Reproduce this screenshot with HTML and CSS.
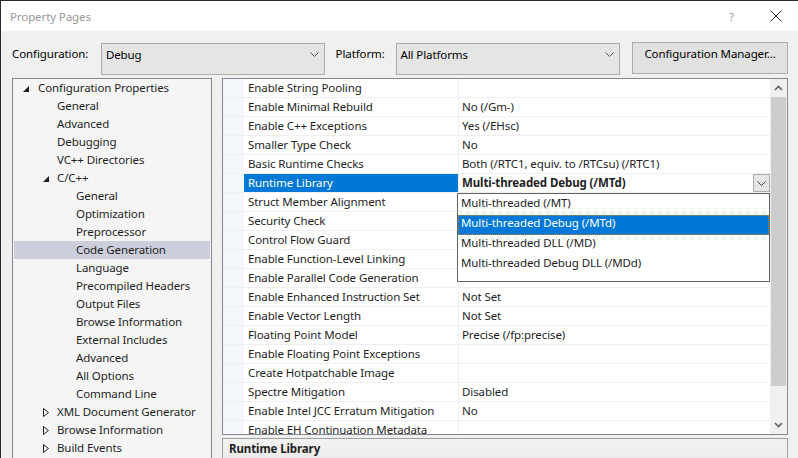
FILE: index.html
```html
<!DOCTYPE html>
<html lang="en">
<head>
    <meta charset="UTF-8">
    <title>Property Pages</title>
    <link rel="stylesheet" href="styles.css">
</head>
<body>
<div class="window">
    <div class="titlebar">
        <span class="title">Property Pages</span>
        <span class="help">?</span>
        <svg class="close" width="12" height="12" viewBox="0 0 12 12"><path d="M0.5 0.5L11.5 11.5M11.5 0.5L0.5 11.5" stroke="#333" stroke-width="1" fill="none"/></svg>
    </div>

    <div class="content">
        <div class="toolbar">
            <span class="label">Configuration:</span>
            <div class="combo combo-config">
                <span>Debug</span>
                <svg class="chev" width="9" height="5" viewBox="0 0 9 5"><path d="M0.5 0.5L4.5 4.5L8.5 0.5" stroke="#555" fill="none"/></svg>
            </div>
            <span class="label label-platform">Platform:</span>
            <div class="combo combo-platform">
                <span>All Platforms</span>
                <svg class="chev" width="9" height="5" viewBox="0 0 9 5"><path d="M0.5 0.5L4.5 4.5L8.5 0.5" stroke="#555" fill="none"/></svg>
            </div>
            <div class="button">Configuration Manager...</div>
        </div>

        <div class="main">
            <div class="tree">
                <div class="node lvl0"><svg class="tri" width="6" height="6" viewBox="0 0 6 6"><path d="M6 0L6 6L0 6Z" fill="#1e1e1e"/></svg>Configuration Properties</div>
                <div class="node lvl1">General</div>
                <div class="node lvl1">Advanced</div>
                <div class="node lvl1">Debugging</div>
                <div class="node lvl1">VC++ Directories</div>
                <div class="node lvl1"><svg class="tri" width="6" height="6" viewBox="0 0 6 6"><path d="M6 0L6 6L0 6Z" fill="#1e1e1e"/></svg>C/C++</div>
                <div class="node lvl2">General</div>
                <div class="node lvl2">Optimization</div>
                <div class="node lvl2">Preprocessor</div>
                <div class="node lvl2 selected">Code Generation</div>
                <div class="node lvl2">Language</div>
                <div class="node lvl2">Precompiled Headers</div>
                <div class="node lvl2">Output Files</div>
                <div class="node lvl2">Browse Information</div>
                <div class="node lvl2">External Includes</div>
                <div class="node lvl2">Advanced</div>
                <div class="node lvl2">All Options</div>
                <div class="node lvl2">Command Line</div>
                <div class="node lvl1"><svg class="tri closed" width="6" height="9" viewBox="0 0 6 9"><path d="M0.5 0.5L5.5 4.5L0.5 8.5Z" stroke="#1e1e1e" fill="none"/></svg>XML Document Generator</div>
                <div class="node lvl1"><svg class="tri closed" width="6" height="9" viewBox="0 0 6 9"><path d="M0.5 0.5L5.5 4.5L0.5 8.5Z" stroke="#1e1e1e" fill="none"/></svg>Browse Information</div>
                <div class="node lvl1"><svg class="tri closed" width="6" height="9" viewBox="0 0 6 9"><path d="M0.5 0.5L5.5 4.5L0.5 8.5Z" stroke="#1e1e1e" fill="none"/></svg>Build Events</div>
            </div>

            <div class="right">
                <div class="grid">
                    <div class="rows">
                        <div class="row"><div class="gutter"></div><div class="name">Enable String Pooling</div><div class="value"></div></div>
                        <div class="row"><div class="gutter"></div><div class="name">Enable Minimal Rebuild</div><div class="value">No (/Gm-)</div></div>
                        <div class="row"><div class="gutter"></div><div class="name">Enable C++ Exceptions</div><div class="value">Yes (/EHsc)</div></div>
                        <div class="row"><div class="gutter"></div><div class="name">Smaller Type Check</div><div class="value">No</div></div>
                        <div class="row"><div class="gutter"></div><div class="name">Basic Runtime Checks</div><div class="value">Both (/RTC1, equiv. to /RTCsu) (/RTC1)</div></div>
                        <div class="row active"><div class="gutter"></div><div class="name">Runtime Library</div><div class="value">Multi-threaded Debug (/MTd)<span class="dropbtn"><svg width="9" height="5" viewBox="0 0 9 5"><path d="M0.5 0.5L4.5 4.5L8.5 0.5" stroke="#444" fill="none"/></svg></span></div></div>
                        <div class="row"><div class="gutter"></div><div class="name">Struct Member Alignment</div><div class="value"></div></div>
                        <div class="row"><div class="gutter"></div><div class="name">Security Check</div><div class="value"></div></div>
                        <div class="row"><div class="gutter"></div><div class="name">Control Flow Guard</div><div class="value"></div></div>
                        <div class="row"><div class="gutter"></div><div class="name">Enable Function-Level Linking</div><div class="value"></div></div>
                        <div class="row"><div class="gutter"></div><div class="name">Enable Parallel Code Generation</div><div class="value"></div></div>
                        <div class="row"><div class="gutter"></div><div class="name">Enable Enhanced Instruction Set</div><div class="value">Not Set</div></div>
                        <div class="row"><div class="gutter"></div><div class="name">Enable Vector Length</div><div class="value">Not Set</div></div>
                        <div class="row"><div class="gutter"></div><div class="name">Floating Point Model</div><div class="value">Precise (/fp:precise)</div></div>
                        <div class="row"><div class="gutter"></div><div class="name">Enable Floating Point Exceptions</div><div class="value"></div></div>
                        <div class="row"><div class="gutter"></div><div class="name">Create Hotpatchable Image</div><div class="value"></div></div>
                        <div class="row"><div class="gutter"></div><div class="name">Spectre Mitigation</div><div class="value">Disabled</div></div>
                        <div class="row"><div class="gutter"></div><div class="name">Enable Intel JCC Erratum Mitigation</div><div class="value">No</div></div>
                        <div class="row"><div class="gutter"></div><div class="name">Enable EH Continuation Metadata</div><div class="value"></div></div>

                        <div class="droplist">
                            <div class="item">Multi-threaded (/MT)</div>
                            <div class="item current">Multi-threaded Debug (/MTd)</div>
                            <div class="item">Multi-threaded DLL (/MD)</div>
                            <div class="item">Multi-threaded Debug DLL (/MDd)</div>
                        </div>
                    </div>
                    <div class="scrollbar">
                        <svg class="arrow" width="9" height="6" viewBox="0 0 9 6"><path d="M1 5L4.5 1.5L8 5" stroke="#606060" stroke-width="1.6" fill="none"/></svg>
                        <div class="thumb"></div>
                        <div class="track"></div>
                        <svg class="arrow" width="9" height="6" viewBox="0 0 9 6"><path d="M1 1L4.5 4.5L8 1" stroke="#606060" stroke-width="1.6" fill="none"/></svg>
                    </div>
                </div>
                <div class="desc">Runtime Library</div>
            </div>
        </div>
    </div>
</div>
</body>
</html>
```

FILE: styles.css
```css
* {
    box-sizing: border-box;
}
body {
    margin: 0;
    width: 798px;
    height: 458px;
    overflow: hidden;
    font-family: "Noto Sans", "Open Sans", sans-serif;
    font-size: 11.5px;
    letter-spacing: -0.1px;
    color: #1e1e1e;
    background: #f0f0f0;
}
.window {
    height: 458px;
    border-top: 1px solid #2b2b2b;
    border-left: 1px solid #2b2b2b;
    display: flex;
    flex-direction: column;
}
.titlebar {
    height: 30px;
    flex-shrink: 0;
    background: #fff;
    display: flex;
    align-items: center;
    padding-left: 9px;
}
.title {
    color: #999;
    flex: 1;
}
.help {
    color: #999;
    margin-right: 36px;
}
.close {
    margin-right: 16px;
}
.content {
    flex: 1;
    padding: 12px 10px 0 11px;
    display: flex;
    flex-direction: column;
    min-height: 0;
}
.toolbar {
    height: 31px;
    flex-shrink: 0;
    display: flex;
    align-items: flex-start;
    margin-bottom: 4px;
}
.label {
    width: 89px;
    line-height: 22px;
    color: #000;
}
.label-platform {
    width: 60px;
    margin-left: 11px;
}
.combo {
    height: 32px;
    border: 1px solid #adadad;
    background: #e5e5e5;
    display: flex;
    align-items: center;
    justify-content: space-between;
    padding: 0 5px 9px 4px;
    color: #000;
}
.combo-config {
    width: 224px;
}
.combo-platform {
    width: 225px;
}
.button {
    margin-left: 12px;
    width: 156px;
    height: 32px;
    margin-top: -1px;
    border: 1px solid #adadad;
    background: #e1e1e1;
    display: flex;
    align-items: center;
    justify-content: center;
    padding-bottom: 9px;
    color: #000;
}
.main {
    flex: 1;
    display: flex;
    min-height: 0;
}
.tree {
    width: 200px;
    flex-shrink: 0;
    border: 1px solid #828790;
    border-bottom: none;
    background: #f5f5f5;
    padding: 0 1px;
    overflow: hidden;
}
.node {
    height: 18px;
    line-height: 17px;
    white-space: nowrap;
    position: relative;
}
.lvl0 {
    padding-left: 24px;
}
.lvl1 {
    padding-left: 43px;
}
.lvl2 {
    padding-left: 62px;
}
.tri {
    position: absolute;
    top: 7px;
}
.lvl0 .tri {
    left: 9px;
}
.lvl1 .tri {
    left: 29px;
}
.tri.closed {
    top: 5px;
}
.selected {
    background: #cccedb;
}
.right {
    flex: 1;
    margin-left: 10px;
    display: flex;
    flex-direction: column;
    min-width: 0;
}
.grid {
    height: 357px;
    flex-shrink: 0;
    border: 1px solid #828790;
    display: flex;
    background: #fff;
}
.rows {
    flex: 1;
    position: relative;
    overflow: hidden;
}
.row {
    height: 19px;
    display: flex;
    border-bottom: 1px solid #f0f0f4;
}
.gutter {
    width: 21px;
    background: #f3f6fb;
}
.name {
    width: 214px;
    padding-left: 4px;
    line-height: 18px;
    white-space: nowrap;
}
.value {
    flex: 1;
    border-left: 1px solid #f0f0f4;
    padding-left: 3px;
    line-height: 18px;
    white-space: nowrap;
    position: relative;
}
.active .name {
    background: #0078d7;
    color: #fff;
}
.active .value {
    font-weight: bold;
}
.dropbtn {
    position: absolute;
    right: 0;
    top: 0;
    width: 17px;
    height: 18px;
    border: 1px solid #adadad;
    background: #e5e5e5;
    display: flex;
    align-items: center;
    justify-content: center;
}
.droplist {
    position: absolute;
    left: 234px;
    top: 114px;
    width: 313px;
    height: 89px;
    border: 1px solid #646464;
    background: #fff;
    padding-top: 1px;
}
.item {
    height: 20px;
    line-height: 16px;
    padding-left: 3px;
    white-space: nowrap;
}
.item.current {
    background: #0078d7;
    color: #fff;
    outline: 1px dotted #d08020;
    outline-offset: -1px;
}
.scrollbar {
    width: 17px;
    background: #f0f0f0;
    display: flex;
    flex-direction: column;
    align-items: center;
}
.arrow {
    margin: 6px 0;
}
.thumb {
    width: 15px;
    height: 289px;
    background: #cdcdcd;
}
.track {
    flex: 1;
}
.desc {
    margin-top: 3px;
    flex: 1;
    border: 1px solid #a0a0a0;
    border-bottom: none;
    background: linear-gradient(#f3f3f3, #ececec);
    font-weight: bold;
    padding: 2px 0 0 6px;
}
```
